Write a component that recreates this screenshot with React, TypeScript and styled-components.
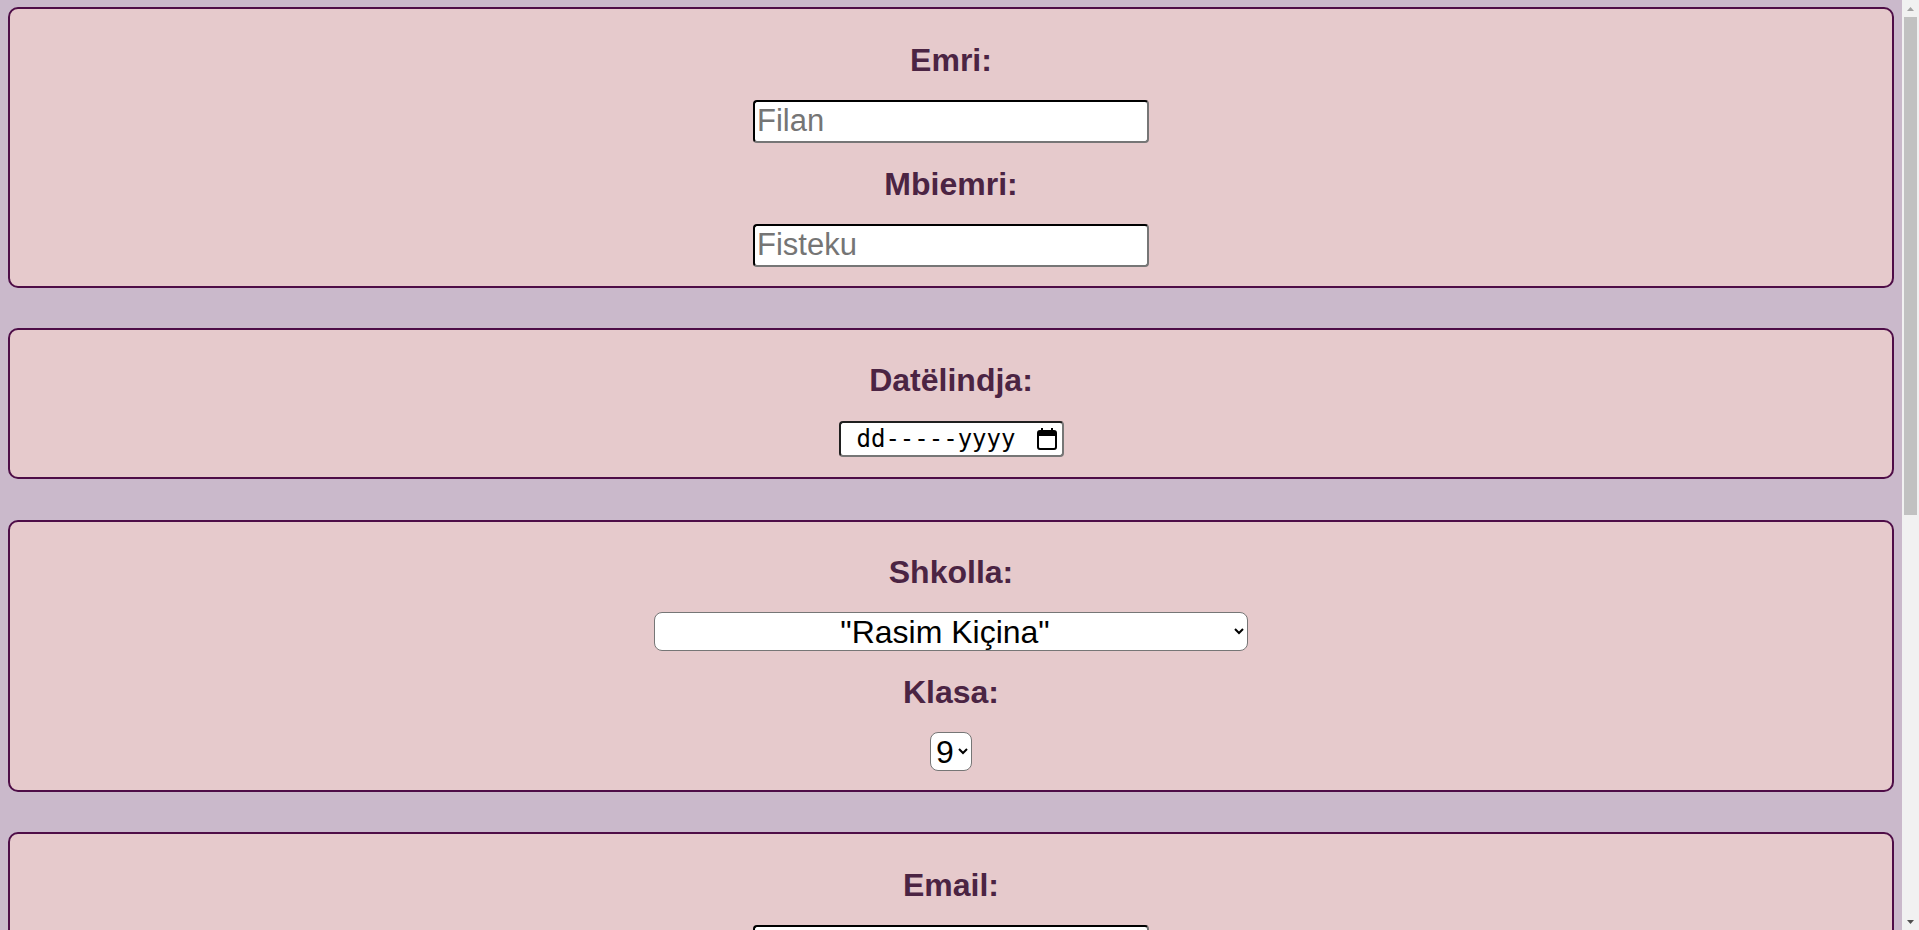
import React from "react";
import styled, { createGlobalStyle } from "styled-components";

const GlobalStyle = createGlobalStyle`
  html {
    background-color: #cab9cb;
    scrollbar-width: none;
  }
  html::-webkit-scrollbar {
    display: none;
  }
  body {
    margin: 7px 25px 8px 8px;
    font-family: "Liberation Sans", Arial, sans-serif;
    background-color: #cab9cb;
  }
`;

// fake classic scrollbar on the right edge of the window
const ScrollBar = styled.aside`
  position: fixed;
  top: 0;
  right: 0;
  width: 17px;
  height: 100vh;
  display: flex;
  flex-direction: column;
  background-color: #f1f1f1;
`;

const ScrollButton = styled.div`
  height: 17px;
  display: flex;
  align-items: center;
  justify-content: center;
  flex-shrink: 0;
`;

const ScrollTrack = styled.div`
  flex: 1;
  padding: 0 0 0 2px;
`;

const ScrollThumb = styled.div`
  width: 13px;
  height: 498px;
  background-color: #c1c1c1;
`;

const Form = styled.form`
  display: flex;
  flex-direction: column;
  gap: 40.3px;
`;

const Card = styled.section`
  display: flex;
  flex-direction: column;
  align-items: center;
  background-color: #e6cacc;
  border: 2px solid #4e0d47;
  border-radius: 10px;
  padding: 32.5px 12px 19px;
`;

const Label = styled.label`
  display: block;
  font-size: 32px;
  font-weight: bold;
  color: #4b2443;
  line-height: normal;
  margin-bottom: 21px;
`;

const TextInput = styled.input`
  box-sizing: border-box;
  width: 396px;
  height: 43px;
  padding: 1px 2px;
  margin: 0 0 23px;
  font-family: "Liberation Sans", Arial, sans-serif;
  font-size: 31px;
  color: #000;
  background: #fff;
  border: 2px inset #767676;
  border-top-color: #1f1f1f;
  border-left-color: #1f1f1f;
  border-radius: 4px;
  outline: none;

  &::placeholder {
    color: #757575;
  }

  &:last-child {
    margin-bottom: 0;
  }
`;

const DateField = styled.div`
  box-sizing: border-box;
  display: flex;
  align-items: center;
  justify-content: space-between;
  width: 225px;
  height: 36px;
  margin: 1px 0;
  padding: 0 5px 0 16px;
  background: #fff;
  border: 2px solid #767676;
  border-top-color: #1f1f1f;
  border-left-color: #1f1f1f;
  border-radius: 4px;
  font-family: "DejaVu Sans Mono", "Liberation Mono", monospace;
  font-size: 24px;
  color: #000;
`;

const Select = styled.select<{ $width: number }>`
  box-sizing: border-box;
  width: ${(p) => p.$width}px;
  height: 39px;
  margin: 0 0 23px;
  padding: 0;
  font-family: "Liberation Sans", Arial, sans-serif;
  font-size: 32px;
  color: #000;
  background-color: #fff;
  border: 1px solid #767676;
  border-radius: 8px;
  text-align: center;
  text-align-last: center;

  &:last-child {
    margin-bottom: 0;
  }
`;

const RadioRow = styled.div`
  display: flex;
  gap: 30px;
  font-size: 26px;
  color: #4b2443;
`;

const TextArea = styled.textarea`
  box-sizing: border-box;
  width: 396px;
  height: 150px;
  margin-bottom: 23px;
  font-family: "Liberation Sans", Arial, sans-serif;
  font-size: 24px;
  border: 2px inset #767676;
  border-radius: 4px;
`;

const SubmitButton = styled.button`
  height: 45px;
  padding: 0 30px;
  font-family: "Liberation Sans", Arial, sans-serif;
  font-size: 26px;
  font-weight: bold;
  color: #fff;
  background-color: #4e0d47;
  border: none;
  border-radius: 8px;
`;

const CalendarIcon = () => (
  <svg width="20" height="22" viewBox="0 0 20 22" aria-hidden="true">
    <rect x="1" y="3" width="18" height="18" rx="2" fill="none" stroke="#000" strokeWidth="2" />
    <rect x="1" y="3" width="18" height="5" fill="#000" />
    <rect x="4" y="0" width="2" height="4" fill="#000" />
    <rect x="14" y="0" width="2" height="4" fill="#000" />
  </svg>
);

const Arrow = ({ down, color }: { down?: boolean; color: string }) => (
  <svg width="7" height="4" viewBox="0 0 7 4" aria-hidden="true">
    <path d={down ? "M0 0H7L3.5 4Z" : "M0 4H7L3.5 0Z"} fill={color} />
  </svg>
);

const classes = ["6", "7", "8", "9"];

export default function App() {
  return (
    <>
      <GlobalStyle />
      <Form onSubmit={(e) => e.preventDefault()}>
        <Card>
          <Label htmlFor="emri">Emri:</Label>
          <TextInput id="emri" type="text" placeholder="Filan" />
          <Label htmlFor="mbiemri">Mbiemri:</Label>
          <TextInput id="mbiemri" type="text" placeholder="Fisteku" />
        </Card>

        <Card>
          <Label>Datëlindja:</Label>
          <DateField>
            <span>dd-----yyyy</span>
            <CalendarIcon />
          </DateField>
        </Card>

        <Card>
          <Label htmlFor="shkolla">Shkolla:</Label>
          <Select id="shkolla" $width={594} defaultValue="rk">
            <option value="rk">"Rasim Kiçina"</option>
            <option value="other">Tjetër</option>
          </Select>
          <Label htmlFor="klasa">Klasa:</Label>
          <Select id="klasa" $width={42} defaultValue="9">
            {classes.map((c) => (
              <option key={c} value={c}>
                {c}
              </option>
            ))}
          </Select>
        </Card>

        <Card>
          <Label htmlFor="email">Email:</Label>
          <TextInput id="email" type="email" placeholder="filan@gmail.com" />
          <Label htmlFor="tel">Telefoni:</Label>
          <TextInput id="tel" type="tel" placeholder="044 000 000" />
        </Card>

        <Card>
          <Label>Gjinia:</Label>
          <RadioRow>
            <label>
              <input type="radio" name="gjinia" /> Mashkull
            </label>
            <label>
              <input type="radio" name="gjinia" /> Femër
            </label>
          </RadioRow>
        </Card>

        <Card>
          <Label htmlFor="koment">Komente:</Label>
          <TextArea id="koment" />
          <SubmitButton type="submit">Dërgo</SubmitButton>
        </Card>
      </Form>

      <ScrollBar>
        <ScrollButton>
          <Arrow color="#a3a3a3" />
        </ScrollButton>
        <ScrollTrack>
          <ScrollThumb />
        </ScrollTrack>
        <ScrollButton>
          <Arrow down color="#505050" />
        </ScrollButton>
      </ScrollBar>
    </>
  );
}
